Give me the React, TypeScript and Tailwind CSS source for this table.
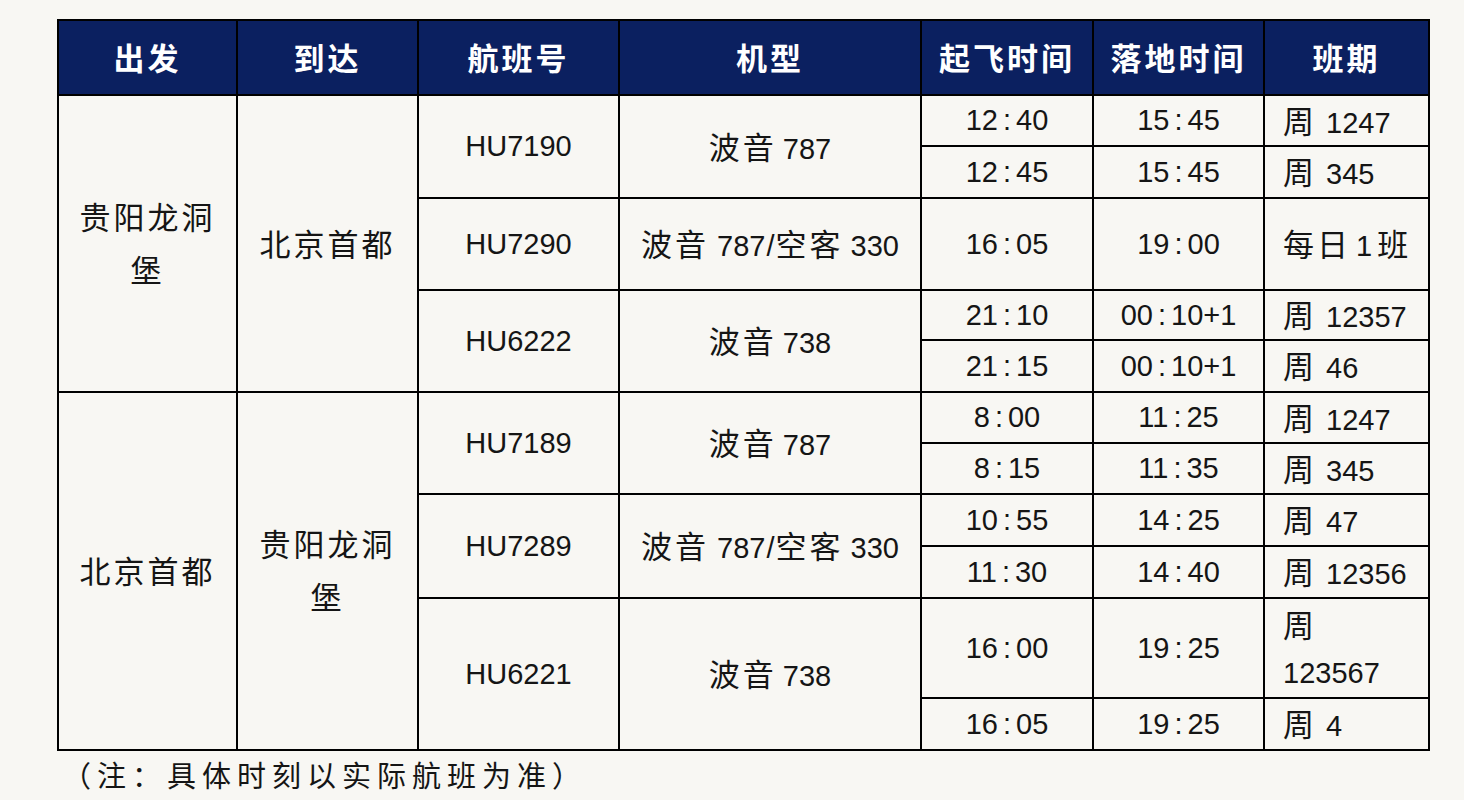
import React from "react";

const base = "font-['Liberation_Sans','Noto_Sans_CJK_SC',sans-serif]";

function T({ v }: { v: string }) {
  const [a, b] = v.split(":");
  return (
    <span>
      {a}
      <span className="mx-[5px]">:</span>
      {b}
    </span>
  );
}

function Zh({ children }: { children: React.ReactNode }) {
  return <span className="tracking-[3px] text-[31px] font-['Noto_Sans_CJK_SC',sans-serif]">{children}</span>;
}

function Plane({ v }: { v: string }) {
  if (v === "mix") {
    return (
      <span>
        <Zh>波音</Zh>
        <span className="ml-[8px]">787</span>
        <span className="mx-[1px]">/</span>
        <Zh>空客</Zh>
        <span className="ml-[7px]">330</span>
      </span>
    );
  }
  return (
    <span>
      <Zh>波音</Zh>
      <span className="ml-[6px]">{v}</span>
    </span>
  );
}

function Week({ v }: { v: string }) {
  return (
    <span>
      <span className="mr-[12px] text-[31px] font-['Noto_Sans_CJK_SC',sans-serif]">周</span>
      {v}
    </span>
  );
}

const td = "border-2 border-black text-center align-middle p-0";
const tdl = "border-2 border-black text-left align-middle p-0 pl-[18px]";

export default function App() {
  return (
    <div className={`w-[1464px] h-[800px] bg-[#f8f7f3] pt-[19px] pl-[57px] text-[#151515] ${base}`}>
      <table className="table-fixed border-collapse w-[1371px] text-[29px] leading-none">
        <colgroup>
          <col className="w-[179px]" />
          <col className="w-[181px]" />
          <col className="w-[201px]" />
          <col className="w-[302px]" />
          <col className="w-[172px]" />
          <col className="w-[171px]" />
          <col className="w-[165px]" />
        </colgroup>
        <thead>
          <tr className="h-[75px] bg-[#0b2060] text-white font-bold">
            <th className={td}><Zh>出发</Zh></th>
            <th className={td}><Zh>到达</Zh></th>
            <th className={td}><Zh>航班号</Zh></th>
            <th className={td}><Zh>机型</Zh></th>
            <th className={td}><Zh>起飞时间</Zh></th>
            <th className={td}><Zh>落地时间</Zh></th>
            <th className={td}><Zh>班期</Zh></th>
          </tr>
        </thead>
        <tbody className="font-normal">
          <tr className="h-[51px]">
            <td className={`${td} leading-[50px]`} rowSpan={5}>
              <Zh>贵阳龙洞</Zh>
              <br />
              <Zh>堡</Zh>
            </td>
            <td className={td} rowSpan={5}><Zh>北京首都</Zh></td>
            <td className={td} rowSpan={2}>HU7190</td>
            <td className={td} rowSpan={2}><Plane v="787" /></td>
            <td className={td}><T v="12:40" /></td>
            <td className={td}><T v="15:45" /></td>
            <td className={tdl}><Week v="1247" /></td>
          </tr>
          <tr className="h-[52px]">
            <td className={td}><T v="12:45" /></td>
            <td className={td}><T v="15:45" /></td>
            <td className={tdl}><Week v="345" /></td>
          </tr>
          <tr className="h-[92px]">
            <td className={td}>HU7290</td>
            <td className={td}><Plane v="mix" /></td>
            <td className={td}><T v="16:05" /></td>
            <td className={td}><T v="19:00" /></td>
            <td className={tdl}>
              <Zh>每日</Zh>
              <span className="mx-[5px]">1</span>
              <Zh>班</Zh>
            </td>
          </tr>
          <tr className="h-[50px]">
            <td className={td} rowSpan={2}>HU6222</td>
            <td className={td} rowSpan={2}><Plane v="738" /></td>
            <td className={td}><T v="21:10" /></td>
            <td className={td}><T v="00:10+1" /></td>
            <td className={tdl}><Week v="12357" /></td>
          </tr>
          <tr className="h-[52px]">
            <td className={td}><T v="21:15" /></td>
            <td className={td}><T v="00:10+1" /></td>
            <td className={tdl}><Week v="46" /></td>
          </tr>
          <tr className="h-[51px]">
            <td className={td} rowSpan={6}><Zh>北京首都</Zh></td>
            <td className={`${td} leading-[50px]`} rowSpan={6}>
              <Zh>贵阳龙洞</Zh>
              <br />
              <Zh>堡</Zh>
            </td>
            <td className={td} rowSpan={2}>HU7189</td>
            <td className={td} rowSpan={2}><Plane v="787" /></td>
            <td className={td}><T v="8:00" /></td>
            <td className={td}><T v="11:25" /></td>
            <td className={tdl}><Week v="1247" /></td>
          </tr>
          <tr className="h-[51px]">
            <td className={td}><T v="8:15" /></td>
            <td className={td}><T v="11:35" /></td>
            <td className={tdl}><Week v="345" /></td>
          </tr>
          <tr className="h-[52px]">
            <td className={td} rowSpan={2}>HU7289</td>
            <td className={td} rowSpan={2}><Plane v="mix" /></td>
            <td className={td}><T v="10:55" /></td>
            <td className={td}><T v="14:25" /></td>
            <td className={tdl}><Week v="47" /></td>
          </tr>
          <tr className="h-[52px]">
            <td className={td}><T v="11:30" /></td>
            <td className={td}><T v="14:40" /></td>
            <td className={tdl}><Week v="12356" /></td>
          </tr>
          <tr className="h-[100px]">
            <td className={td} rowSpan={2}>HU6221</td>
            <td className={td} rowSpan={2}><Plane v="738" /></td>
            <td className={td}><T v="16:00" /></td>
            <td className={td}><T v="19:25" /></td>
            <td className={`${tdl} leading-[46px]`}>
              <Zh>周</Zh>
              <br />
              <span>123567</span>
            </td>
          </tr>
          <tr className="h-[52px]">
            <td className={td}><T v="16:05" /></td>
            <td className={td}><T v="19:25" /></td>
            <td className={tdl}><Week v="4" /></td>
          </tr>
        </tbody>
      </table>
      <div className="mt-[8px] ml-[5px] text-[29px] leading-[30px] tracking-[6px] font-['Noto_Sans_CJK_SC',sans-serif]">
        （注：具体时刻以实际航班为准）
      </div>
    </div>
  );
}
